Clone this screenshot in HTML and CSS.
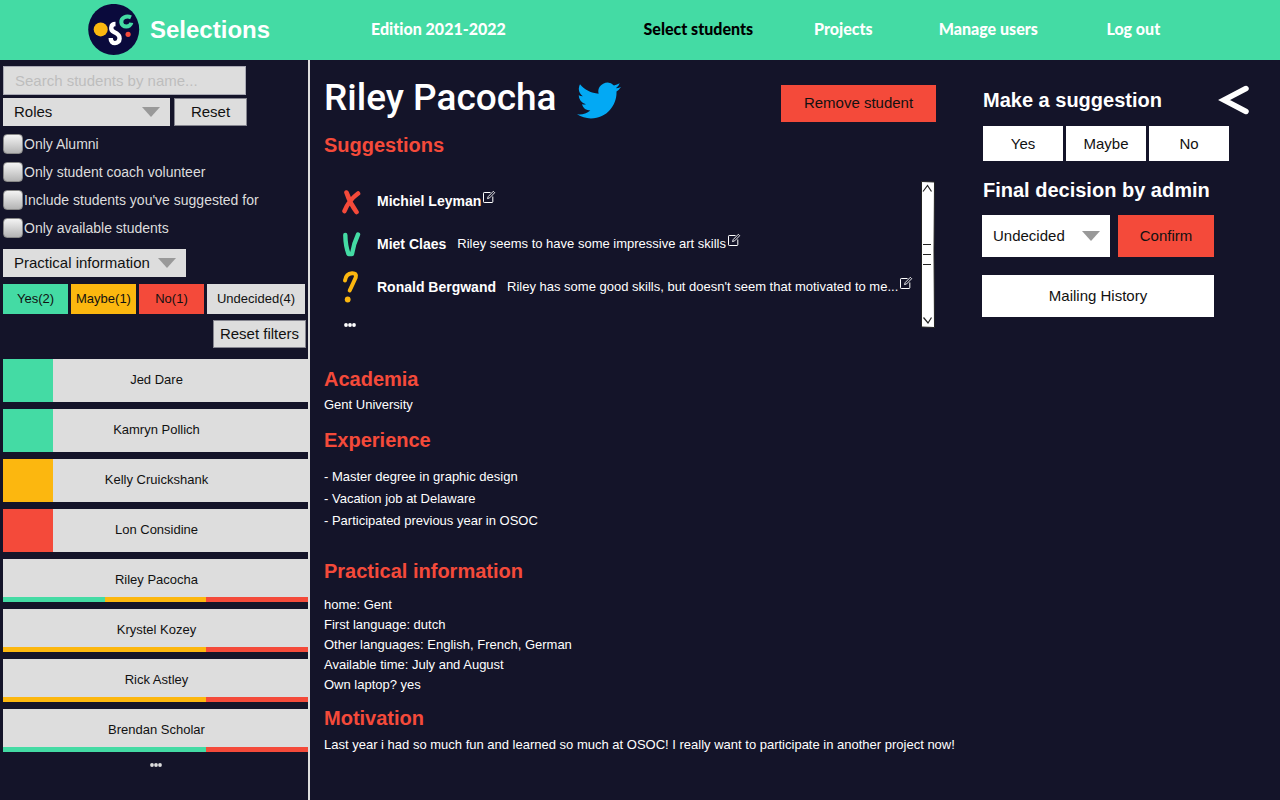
FILE: index.html
```html
<!DOCTYPE html>
<html lang="en">
<head>
<meta charset="utf-8">
<meta name="viewport" content="width=device-width, initial-scale=1">
<title>Selections</title>
<link rel="stylesheet" href="styles.css">
</head>
<body>
<svg class="sprite" aria-hidden="true">
  <symbol id="edit" viewBox="0 0 14 14">
    <path d="M8.500 2.500H2.200Q1.500 2.500 1.500 3.200V11.800Q1.500 12.500 2.200 12.500H10Q10.800 12.500 10.800 11.800V6.500" fill="none" stroke="currentColor"/>
    <path d="M5.500 8.600L6.200 6.600L11.300 1.300L12.700 2.700L7.600 7.900Z" fill="none" stroke="currentColor" stroke-width=".9"/>
  </symbol>
</svg>
<header class="topbar">
  <a class="brand" href="#">
    <svg class="logo" viewBox="0 0 52 52" aria-hidden="true">
      <circle cx="25.700" cy="25.400" r="25.500" fill="#0a0a3c"/>
      <circle cx="12.700" cy="25.400" r="7" fill="#fcb70f"/>
      <path d="M27.500 20C22.500 20 21.800 26 26 28C29.500 29.600 31.800 31 31.600 34.500C31.300 40.500 22.500 41 22.700 34" fill="none" stroke="#fff" stroke-width="4.400"/>
      <path d="M43 13.400C38.500 11.300 33 13.500 33.300 18.300C33.600 23.800 42.500 24 43.300 18.800" fill="none" stroke="#44dba4" stroke-width="4"/>
      <circle cx="40.100" cy="30.300" r="2.600" fill="#f44a3a"/>
    </svg>
    <span>Selections</span>
  </a>
  <a class="edition" href="#">Edition 2021-2022</a>
  <nav class="nav">
    <a class="active" href="#">Select students</a>
    <a href="#">Projects</a>
    <a href="#">Manage users</a>
    <a href="#">Log out</a>
  </nav>
</header>
<div class="layout">
  <aside class="sidebar">
    <form class="filters">
      <input class="search" type="text" placeholder="Search students by name..." aria-label="Search students by name">
      <div class="row">
        <span class="select roles"><select aria-label="Roles"><option>Roles</option></select></span>
        <button class="outlined reset" type="button">Reset</button>
      </div>
      <div class="checks">
        <label><input type="checkbox">Only Alumni</label>
        <label><input type="checkbox">Only student coach volunteer</label>
        <label><input type="checkbox">Include students you've suggested for</label>
        <label><input type="checkbox">Only available students</label>
      </div>
      <span class="select practical"><select aria-label="Practical information"><option>Practical information</option></select></span>
      <div class="statuses">
        <button class="yes" type="button">Yes(2)</button>
        <button class="maybe" type="button">Maybe(1)</button>
        <button class="no" type="button">No(1)</button>
        <button class="undecided" type="button">Undecided(4)</button>
      </div>
      <button class="outlined reset-filters" type="button">Reset filters</button>
    </form>
    <ul class="students">
      <li><a href="#"><i class="flag yes"></i>Jed Dare</a></li>
      <li><a href="#"><i class="flag yes"></i>Kamryn Pollich</a></li>
      <li><a href="#"><i class="flag maybe"></i>Kelly Cruickshank</a></li>
      <li><a href="#"><i class="flag no"></i>Lon Considine</a></li>
      <li><a href="#">Riley Pacocha<span class="votes"><i class="yes"></i><i class="maybe"></i><i class="no"></i></span></a></li>
      <li><a href="#">Krystel Kozey<span class="votes"><i class="maybe"></i><i class="maybe"></i><i class="no"></i></span></a></li>
      <li><a href="#">Rick Astley<span class="votes"><i class="maybe"></i><i class="maybe"></i><i class="no"></i></span></a></li>
      <li><a href="#">Brendan Scholar<span class="votes"><i class="yes"></i><i class="yes"></i><i class="no"></i></span></a></li>
    </ul>
    <svg class="dots" viewBox="0 0 12 4" aria-hidden="true"><circle cx="2" cy="2" r="1.900"/><circle cx="6" cy="2" r="1.900"/><circle cx="10" cy="2" r="1.900"/></svg>
  </aside>
  <main class="profile">
    <div class="title">
      <h1>Riley Pacocha</h1>
      <a href="#" aria-label="Twitter"><svg class="twitter" viewBox="0 2 24 20" aria-hidden="true"><path fill="#03a9f4" d="M23.950 4.570a10 10 0 0 1-2.820.770 4.960 4.960 0 0 0 2.160-2.720c-.950.550-2 .960-3.130 1.180a4.920 4.920 0 0 0-8.380 4.480C7.690 8.090 4.070 6.130 1.640 3.160a4.820 4.820 0 0 0-.670 2.480c0 1.710.870 3.210 2.190 4.100a4.900 4.900 0 0 1-2.230-.620v.060a4.920 4.920 0 0 0 3.950 4.830 5 5 0 0 1-2.210.080 4.940 4.940 0 0 0 4.600 3.420A9.870 9.870 0 0 1 0 19.540a13.990 13.990 0 0 0 7.560 2.210c9.050 0 14-7.500 14-13.980 0-.210 0-.420-.020-.630a9.940 9.940 0 0 0 2.460-2.550z"/></svg></a>
      <button class="remove" type="button">Remove student</button>
    </div>
    <h2>Suggestions</h2>
    <div class="suggestions">
      <ul>
        <li>
          <svg class="mark" viewBox="0 0 20 32" aria-hidden="true"><path d="M5.500 7.500Q9 18 15.500 27M17 8.500Q8 15 3.500 26" fill="none" stroke="#f44a3a" stroke-width="4.600" stroke-linecap="round"/></svg>
          <strong>Michiel Leyman</strong><a href="#" aria-label="Edit"><svg class="edit"><use href="#edit"/></svg></a>
        </li>
        <li>
          <svg class="mark" viewBox="0 0 20 32" aria-hidden="true"><path d="M4.300 7Q4.500 18 7.500 26H11Q12.500 16 17 6.500" fill="none" stroke="#44dba4" stroke-width="4.400" stroke-linecap="round" stroke-linejoin="round"/></svg>
          <strong>Miet Claes</strong><span class="comment">Riley seems to have some impressive art skills</span><a href="#" aria-label="Edit"><svg class="edit"><use href="#edit"/></svg></a>
        </li>
        <li>
          <svg class="mark" viewBox="0 0 20 32" aria-hidden="true"><path d="M4 9.500Q5 2.500 11 2.200Q16 2 14.700 6.500Q12.500 11.500 8.700 19.500" fill="none" stroke="#fcb70f" stroke-width="4" stroke-linecap="round" stroke-linejoin="round"/><circle cx="6.700" cy="28.500" r="2.900" fill="#fcb70f"/></svg>
          <strong>Ronald Bergwand</strong><span class="comment">Riley has some good skills, but doesn't seem that motivated to me...</span><a href="#" aria-label="Edit"><svg class="edit"><use href="#edit"/></svg></a>
        </li>
        <li class="more"><svg class="dots" viewBox="0 0 12 4" aria-hidden="true"><circle cx="2" cy="2" r="1.900"/><circle cx="6" cy="2" r="1.900"/><circle cx="10" cy="2" r="1.900"/></svg></li>
      </ul>
      <svg class="scrollbar" viewBox="0 0 14 147" aria-hidden="true">
        <path d="M.5 .5L13.500 1L13 70L13.500 146.500L.5 146Z" fill="#fff" stroke="#222"/>
        <path d="M2 10.500L6.500 4.500L10.500 10.500M2.500 136.500L7 142L10.500 136.500M2 63.500H10M2 73.500H10M2 83.500H10" fill="none" stroke="#222" stroke-width="1.200"/>
      </svg>
    </div>
    <section class="academia">
      <h2>Academia</h2>
      <p>Gent University</p>
    </section>
    <section class="experience">
      <h2>Experience</h2>
      <p>- Master degree in graphic design</p>
      <p>- Vacation job at Delaware</p>
      <p>- Participated previous year in OSOC</p>
    </section>
    <section class="practical-info">
      <h2>Practical information</h2>
      <p>home: Gent</p>
      <p>First language: dutch</p>
      <p>Other languages: English, French, German</p>
      <p>Available time: July and August</p>
      <p>Own laptop? yes</p>
    </section>
    <section class="motivation">
      <h2>Motivation</h2>
      <p>Last year i had so much fun and learned so much at OSOC! I really want to participate in another project now!</p>
    </section>
  </main>
  <aside class="actions">
    <div class="actions-head">
      <h2>Make a suggestion</h2>
      <button class="collapse" type="button" aria-label="Collapse"><svg viewBox="0 0 32 30" aria-hidden="true"><path d="M28 3.500L6 15L28 26.500" fill="none" stroke="#fff" stroke-width="5.500" stroke-linecap="round"/></svg></button>
    </div>
    <div class="choices">
      <button type="button">Yes</button>
      <button type="button">Maybe</button>
      <button type="button">No</button>
    </div>
    <h2>Final decision by admin</h2>
    <div class="decision">
      <span class="select verdict"><select aria-label="Final decision"><option>Undecided</option></select></span>
      <button class="confirm" type="button">Confirm</button>
      <button class="mailing" type="button">Mailing History</button>
    </div>
  </aside>
</div>
</body>
</html>
```
FILE: styles.css
```css
:root {
  --green: #44dba4;
  --yellow: #fcb70f;
  --red: #f44a3a;
  --grey: #dddddd;
  --navy: #141429;
}
* { box-sizing: border-box; }
body {
  margin: 0;
  min-height: 100vh;
  display: flex;
  flex-direction: column;
  background: var(--navy);
  color: #fff;
  font: 13px/20px "Liberation Sans", Arial, sans-serif;
}
h1, h2, p, ul { margin: 0; padding: 0; }
ul { list-style: none; }
a { color: inherit; text-decoration: none; }
h2 { font-size: 20px; line-height: 24px; }
svg { display: block; }
button, input, select {
  font: 15px/20px "Liberation Sans", Arial, sans-serif;
  color: #111;
  border: 0;
  border-radius: 0;
  margin: 0;
  padding: 0;
}
.sprite { display: none; }
.yes { background: var(--green); }
.maybe { background: var(--yellow); }
.no { background: var(--red); }

.topbar {
  display: flex;
  align-items: center;
  height: 60px;
  padding-left: 88px;
  background: var(--green);
}
.brand {
  display: flex;
  align-items: center;
  gap: 10px;
  font-size: 24px;
  font-weight: bold;
}
.logo { width: 52px; height: 52px; }
.edition, .nav {
  padding-bottom: 2px;
  font: 900 16px/20px Lato, sans-serif;
  font-variant-ligatures: none;
}
.edition { margin: 0 120px 0 101px; }
.nav {
  display: grid;
  grid-template-columns: repeat(4, 145px);
  text-align: center;
}
.nav .active { color: #000; }

.layout {
  flex: 1;
  display: grid;
  grid-template-columns: 310px 1fr 298px;
}
.sidebar {
  padding: 6px 0 0 3px;
  border-right: 2px solid var(--grey);
}
.filters { display: flex; flex-direction: column; align-items: flex-start; }
.search {
  width: 243px;
  height: 29px;
  padding: 0 11px;
  background: var(--grey);
  border: 1px solid #a9a9b4;
}
.search::placeholder { color: #bdbdbd; opacity: 1; }
.row { display: flex; gap: 4px; margin-top: 3px; }
.select { position: relative; display: block; }
.select select {
  appearance: none;
  width: 100%;
  height: 28px;
  padding-left: 11px;
  background: var(--grey);
}
.select::after {
  content: "";
  position: absolute;
  top: 50%;
  right: 10px;
  margin-top: -5px;
  border: 9px solid transparent;
  border-top: 10px solid #999;
  border-bottom: 0;
  pointer-events: none;
}
.roles { width: 167px; }
.practical { width: 183px; }
.outlined { height: 28px; background: var(--grey); border: 1px solid #85858f; }
.reset { width: 73px; }
.checks { margin: 4px 0 7px; }
.checks label {
  display: flex;
  align-items: center;
  gap: 1px;
  height: 28px;
  font-size: 14px;
  color: var(--grey);
}
.checks input {
  appearance: none;
  width: 20px;
  height: 20px;
  border: 1px solid #888;
  border-radius: 4px;
  background: linear-gradient(#f4f4f4, #b4b4b4);
}
.statuses {
  align-self: stretch;
  display: grid;
  grid-template-columns: 65px 65px 65px 1fr;
  gap: 3px;
  margin: 7px 3px 6px 0;
}
.statuses button { height: 30px; font-size: 13px; }
.statuses .undecided { background: var(--grey); }
.reset-filters { align-self: flex-end; width: 93px; margin-right: 2px; }
.students { display: grid; gap: 7px; margin-top: 11px; }
.students a {
  position: relative;
  display: flex;
  align-items: center;
  justify-content: center;
  height: 43px;
  padding: 0 0 2px 2px;
  background: var(--grey);
  color: #111;
}
.flag { position: absolute; inset: 0 auto 0 0; width: 50px; }
.votes {
  position: absolute;
  inset: auto 0 0 0;
  display: grid;
  grid-template-columns: 1fr 1fr 1fr;
  height: 5px;
}
.dots { width: 12px; height: 4px; fill: currentColor; }
.sidebar .dots { margin: 11px auto; color: var(--grey); }

.profile { padding: 12px 0 24px 14px; }
.profile h2 { color: var(--red); }
.title { display: flex; align-items: center; height: 52px; margin-bottom: 9px; }
h1 { font: 500 37px/44px Roboto, sans-serif; }
.twitter { width: 44px; height: 37px; margin: 4px 0 0 20px; }
.remove { width: 155px; height: 37px; margin: 10px 46px 0 auto; background: var(--red); }
.suggestions { display: flex; justify-content: space-between; margin: 22px 47px 25px 0; }
.suggestions li { display: flex; align-items: center; height: 43px; }
.suggestions strong { margin-left: 16px; font-size: 14px; }
.mark { width: 20px; height: 32px; margin-left: 17px; }
.comment { margin-left: 11px; }
.edit { width: 14px; height: 14px; margin: 0 0 8px 1px; }
.suggestions .more { height: 34px; padding-left: 20px; }
.scrollbar { width: 14px; height: 147px; margin-top: 2px; }
.academia p { margin-top: 4px; }
.experience { margin-top: 13px; line-height: 22px; }
.experience h2 { margin-bottom: 14px; }
.practical-info { margin-top: 27px; }
.practical-info h2 { margin-bottom: 12px; }
.motivation { margin-top: 11px; }
.motivation p { margin-top: 5px; }

.actions { padding: 24px 30px 0 0; }
.actions-head { display: flex; align-items: center; justify-content: space-between; height: 32px; }
.actions h2 { padding-left: 1px; }
.collapse { width: 32px; height: 30px; background: none; }
.actions button:not(.collapse, .confirm) { background: #fff; }
.choices { display: grid; grid-template-columns: repeat(3, 80px); gap: 3px; margin: 10px 0 17px 1px; }
.choices button { height: 35px; }
.decision { display: grid; grid-template-columns: 128px 96px; gap: 18px 8px; margin-top: 13px; }
.decision button, .verdict select { height: 42px; }
.verdict select { background: #fff; }
.confirm { background: var(--red); }
.mailing { grid-column: span 2; }
```
